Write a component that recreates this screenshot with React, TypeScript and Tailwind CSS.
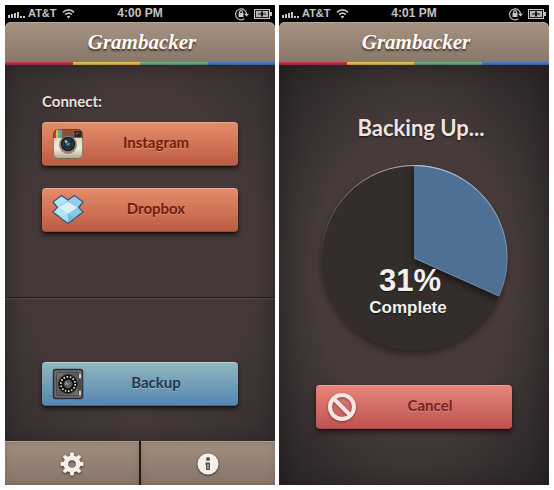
import type { ReactNode } from "react";

function StatusBar({ time }: { time: string }) {
  return (
    <div className="grid h-[17px] grid-cols-3 items-center bg-black px-[3px] font-['Liberation_Sans',Arial,sans-serif] text-[12px] leading-[17px] font-bold text-[#c4c4c4]">
      <div className="flex items-center gap-[3px] text-[11px]">
        <svg width="17" height="12" viewBox="0 0 17 12" fill="#c4c4c4" aria-hidden="true">
          <rect x="0" y="7" width="2" height="3" />
          <rect x="3" y="6" width="2" height="4" />
          <rect x="6" y="5" width="2" height="5" />
          <rect x="9" y="4" width="2" height="6" />
          <rect x="12" y="8" width="2" height="2" />
          <rect x="15" y="8" width="2" height="2" />
        </svg>
        <span>AT&amp;T</span>
        <svg className="ml-[2px]" width="13" height="11" viewBox="0 0 13 11" fill="none" stroke="#c4c4c4" strokeWidth="1.7" aria-hidden="true">
          <path d="M1 4.4C4 .9 9 .9 12 4.4" />
          <path d="M3.2 6.7c2-2.1 4.6-2.1 6.6 0" />
          <path d="M6.5 10.5 4.6 8.5Q6.5 7 8.4 8.5Z" fill="#c4c4c4" stroke="none" />
        </svg>
      </div>
      <span className="text-center">{time}</span>
      <div className="flex items-center justify-end gap-[5px]">
        <svg width="15" height="14" viewBox="0 0 15 14" fill="none" stroke="#c4c4c4" strokeWidth="1.2" aria-hidden="true">
          <path d="M10.5 11.6A5.5 5.5 0 1 1 12.5 7.5" />
          <path d="m10 6.7 2.6 2.8L15 6.7Z" fill="#c4c4c4" stroke="none" />
          <rect x="4.5" y="6" width="5" height="4" fill="#c4c4c4" stroke="none" />
          <path d="M5.6 6V5a1.4 1.4 0 0 1 2.8 0v1" />
        </svg>
        <svg width="18" height="10" viewBox="0 0 18 10" aria-hidden="true">
          <rect x=".5" y=".5" width="15" height="9" fill="#202020" stroke="#c4c4c4" />
          <rect x="2" y="2" width="12" height="6" fill="#b4b4b4" />
          <path d="M16 3h2v4h-2z" fill="#c4c4c4" />
          <path d="M4 4.5h3v-2h2v2h3v1H9v2H7v-2H4Z" fill="#151515" />
        </svg>
      </div>
    </div>
  );
}

function Header() {
  return (
    <header className="bg-black">
      <div className="flex h-10 items-center justify-center rounded-t-md bg-linear-to-b from-[#a5917f] via-[#998677] to-[#89776a] pl-1 inset-shadow-[0_1px_0_#b9a699]">
        <h1 className="font-['Liberation_Serif',serif] text-[21px] leading-8 font-bold text-[#fffaf2] italic [text-shadow:0_2px_2px_#3d3029]">
          Grambacker
        </h1>
      </div>
      <div className="grid h-[3px] grid-cols-4">
        <span className="bg-linear-to-b from-[#c83750] to-[#93283b]" />
        <span className="bg-linear-to-b from-[#f3ce58] to-[#b78e37]" />
        <span className="bg-linear-to-b from-[#7dbb91] to-[#477e5c]" />
        <span className="bg-linear-to-b from-[#527dcd] to-[#345c9f]" />
      </div>
    </header>
  );
}

function Phone({ time, label, children }: { time: string; label: string; children: ReactNode }) {
  return (
    <section aria-label={label} className="flex min-w-0 flex-1 flex-col bg-[#292324]">
      <StatusBar time={time} />
      <Header />
      {children}
    </section>
  );
}

const tones = {
  orange: "from-[#e48c69] to-[#bd5c44] text-[#701d0c] border-t-[#efa98a] border-b-[#9c4937] [text-shadow:0_1px_0_#e2906f]",
  blue: "from-[#8fb7bd] to-[#5686b1] text-[#26384b] border-t-[#b5d4d2] border-b-[#426b90] [text-shadow:0_1px_0_#92b5c5]",
  red: "from-[#e8857a] to-[#bd5352] text-[#702522] border-t-[#f09d91] border-b-[#a34645] [text-shadow:0_1px_0_#dc827b]",
};

function ActionButton({ tone, icon, children }: { tone: keyof typeof tones; icon: ReactNode; children: ReactNode }) {
  return (
    <button
      type="button"
      className={`grid h-11 w-full grid-cols-[32px_1fr] items-center rounded-[4px] border-y bg-linear-to-b px-[10px] font-['Lato',sans-serif] text-[15px] leading-5 font-bold shadow-[0_3px_5px_#171111cc,0_1px_1px_#171111] ${tones[tone]}`}
    >
      {icon}
      <span className="px-3 pb-1 text-center">{children}</span>
    </button>
  );
}

function CameraIcon() {
  return (
    <svg width="32" height="32" viewBox="0 0 32 32" aria-hidden="true">
      <defs>
        <linearGradient id="cameraBody" x2="0" y2="1">
          <stop stopColor="#d5c7ad" />
          <stop offset=".65" stopColor="#f2ead9" />
          <stop offset="1" stopColor="#a99c86" />
        </linearGradient>
        <clipPath id="cameraClip"><rect x="1" y="1" width="30" height="30" rx="5" /></clipPath>
        <radialGradient id="cameraLens">
          <stop stopColor="#69a3aa" />
          <stop offset=".45" stopColor="#244450" />
          <stop offset="1" stopColor="#0a1118" />
        </radialGradient>
      </defs>
      <g clipPath="url(#cameraClip)">
        <rect width="32" height="32" fill="url(#cameraBody)" />
        <rect width="32" height="10" fill="#8a5238" />
        <rect x="2" width="2" height="10" fill="#c83b34" />
        <rect x="4" width="2" height="10" fill="#e8b746" />
        <rect x="6" width="2" height="10" fill="#70ad56" />
        <rect x="8" width="2" height="10" fill="#4a9dcc" />
        <rect x="22.5" y="3" width="7" height="6" rx="1" fill="#28252a" />
        <path d="M24.5 7V5h3" fill="none" stroke="#666773" />
      </g>
      <circle cx="16" cy="17" r="9" fill="#55473988" />
      <circle cx="16" cy="16" r="7.7" fill="#17191c" stroke="#8d877b" strokeWidth="1" />
      <circle cx="16" cy="16" r="5" fill="url(#cameraLens)" stroke="#40515c" />
      <circle cx="14" cy="13.5" r="1.3" fill="#aad4d8" />
      <rect x="1.5" y="1.5" width="29" height="29" rx="5" fill="none" stroke="#583b2c" strokeOpacity=".6" />
    </svg>
  );
}

function BoxIcon() {
  return (
    <svg width="32" height="32" viewBox="0 0 32 32" strokeLinejoin="round" aria-hidden="true">
      <path d="M9.5 1.5 16 6l6.5-4.5L31 8l-4.5 5.5L31 18l-4.5 3.5-10.5 8-10.5-8L1 18l4.5-4.5L1 8Z" fill="#5ca6d3" stroke="#3f5570" strokeWidth="1.5" />
      <path d="M9.5 2.5 16 7 6 13 2 8Z" fill="#b4e0f5" />
      <path d="M22.5 2.5 16 7l10 6 4-5Z" fill="#96d0ee" />
      <path d="m6 13.5 10-6 10 6-10 6.5Z" fill="#d8effa" />
      <path d="m6 13.5 10 6.5-6 3.5L2 18Z" fill="#b7e3f6" />
      <path d="M26 13.5 16 20l6 3.5 8-5.5Z" fill="#89c8e8" />
      <path d="m6 21.5 4 2 6-3.5v8.500Z" fill="#aadcf3" />
      <path d="m26 21.5-4 2-6-3.5v8.500Z" fill="#75bbe2" />
    </svg>
  );
}

function SafeIcon() {
  return (
    <svg width="32" height="32" viewBox="0 0 32 32" aria-hidden="true">
      <defs>
        <linearGradient id="safeMetal" x2="1" y2="1">
          <stop stopColor="#777471" />
          <stop offset=".5" stopColor="#5b5856" />
          <stop offset="1" stopColor="#777370" />
        </linearGradient>
      </defs>
      <rect x="1.5" y="1.5" width="29" height="29" rx="2" fill="#6d6a69" stroke="#2b2e3a" strokeWidth="1.5" />
      <rect x="4.5" y="4.5" width="22" height="23" rx="1" fill="url(#safeMetal)" stroke="#4a4848" />
      <path d="M28 6v4m0 13v4" stroke="#eee" strokeWidth="1.5" />
      <path d="M28 11v11" stroke="#292929" strokeWidth="1" />
      <circle cx="16" cy="16" r="9.5" fill="#090909" stroke="#343434" />
      <circle cx="16" cy="16" r="7.2" fill="none" stroke="#f0f0e9" strokeWidth="1.7" strokeDasharray="1.6 1.63" />
      <circle cx="16" cy="16" r="4.5" fill="#5b5b5b" stroke="#242424" />
      <path d="m14 13 2 3 3-2-3 3v2l-1-3-2 1Z" fill="#a2a2a2" />
    </svg>
  );
}

function CancelIcon() {
  return (
    <svg width="32" height="32" viewBox="0 0 32 32" aria-hidden="true" className="drop-shadow-[0_1px_1px_#7a3934]">
      <circle cx="16" cy="16" r="12" fill="none" stroke="#f5e6e3" strokeWidth="4" />
      <path d="m8 8 16 16" stroke="#f5e6e3" strokeWidth="4" />
    </svg>
  );
}

function GearIcon() {
  const teeth = [0, 45, 90, 135, 180, 225, 270, 315];
  return (
    <svg width="26" height="26" viewBox="0 0 26 26" fill="#f4f1ed" aria-hidden="true" className="drop-shadow-[0_1px_1px_#3e3028]">
      {teeth.map((angle) => (
        <path key={angle} d="M10.8 6 11.3 1.5h3.4l.5 4.5Z" transform={`rotate(${angle} 13 13)`} />
      ))}
      <circle cx="13" cy="13" r="6.2" fill="none" stroke="#f4f1ed" strokeWidth="4.8" />
    </svg>
  );
}

function InfoIcon() {
  return (
    <svg width="24" height="24" viewBox="0 0 24 24" aria-hidden="true" className="drop-shadow-[0_1px_1px_#3e3028]">
      <circle cx="12" cy="12" r="10.5" fill="#f4f1ed" />
      <circle cx="12" cy="7" r="2" fill="#5f4f44" />
      <path d="M9.5 10.5H14V18h-4v-5h-.5Z" fill="#5f4f44" />
      <path d="M11 12h2v5h-2Z" fill="#9b8a7b" />
    </svg>
  );
}

function ProgressPie({ percent }: { percent: number }) {
  const angle = (percent / 100) * Math.PI * 2 + 0.045;
  const x = 93 + 93 * Math.sin(angle);
  const y = 93 - 93 * Math.cos(angle);
  const wedge = `M93 93V0A93 93 0 0 1 ${x} ${y}Z`;
  return (
    <div className="relative mx-auto mt-[23px] w-fit">
      <svg className="block overflow-visible" width="186" height="186" viewBox="0 0 186 186" aria-hidden="true">
        <defs>
          <linearGradient id="pieRim" x2="0" y2="1">
            <stop stopColor="#b9b3ae" />
            <stop offset=".4" stopColor="#665e5b" stopOpacity=".4" />
            <stop offset=".6" stopColor="#332e2b" stopOpacity="0" />
          </linearGradient>
          <linearGradient id="wedgeRim" x2="0" y2="1">
            <stop stopColor="#a9c0d4" />
            <stop offset="1" stopColor="#6889a8" />
          </linearGradient>
          <clipPath id="pieClip"><circle cx="93" cy="93" r="93" /></clipPath>
        </defs>
        <circle cx="93" cy="93" r="93" fill="#332e2b" className="drop-shadow-[0_4px_3px_#2d2524]" />
        <g clipPath="url(#pieClip)">
          <path d={wedge} fill="#4e7095" className="drop-shadow-[0_4px_4px_#171311]" />
        </g>
        <circle cx="93" cy="93" r="92.5" fill="none" stroke="url(#pieRim)" />
        <path d={`M93 .5A92.5 92.5 0 0 1 ${x} ${y}L93 93`} fill="none" stroke="url(#wedgeRim)" />
      </svg>
      <div className="absolute inset-x-0 top-[100px] pr-3 text-center font-['Liberation_Sans',Arial,sans-serif] font-bold text-[#f2f0ed] [text-shadow:0_1px_1px_#171311]">
        <div className="pl-1 text-[31px] leading-8">{percent}%</div>
        <div className="text-[17px] leading-[22px]">Complete</div>
      </div>
    </div>
  );
}

const tabStyle =
  "flex h-11 flex-1 items-center justify-center bg-linear-to-b from-[#a08d7e] to-[#857568] border-t border-[#b09d8f] inset-shadow-[0_0_5px_#594b4266]";

export default function App() {
  return (
    <main className="flex min-h-screen gap-1 bg-white p-[5px]">
      <Phone time="4:00 PM" label="Connect accounts">
        <div className="flex flex-1 flex-col bg-radial from-[#443938] from-60% to-[#342c2d] inset-shadow-[0_2px_14px_#211c1d99]">
          <div className="px-[37px] pt-[26px]">
            <h2 className="font-['Lato',sans-serif] text-[15px] leading-5 font-bold text-[#ebe1df] [text-shadow:0_1px_1px_#191313]">
              Connect:
            </h2>
            <div className="mt-[11px] flex flex-col gap-[22px]">
              <ActionButton tone="orange" icon={<CameraIcon />}>Instagram</ActionButton>
              <ActionButton tone="orange" icon={<BoxIcon />}>Dropbox</ActionButton>
            </div>
          </div>
          <hr className="mt-[65px] border-t border-b border-t-[#211918] border-b-[#514544]" />
          <div className="px-[37px] pt-[63px] pb-[35px]">
            <ActionButton tone="blue" icon={<SafeIcon />}>Backup</ActionButton>
          </div>
        </div>
        <nav className="flex gap-[2px] bg-[#231a18]">
          <button type="button" aria-label="Settings" className={tabStyle}><GearIcon /></button>
          <button type="button" aria-label="Information" className={tabStyle}><InfoIcon /></button>
        </nav>
      </Phone>
      <Phone time="4:01 PM" label="Backup progress">
        <div className="flex-1 bg-radial from-[#463b3a] from-50% to-[#272223] px-[37px] pt-[49px] pb-14 inset-shadow-[0_2px_16px_#1d191b88]">
          <h2 className="pl-[14px] text-center font-['Lato',sans-serif] text-[22px] leading-7 font-bold text-[#f0e4e1] [text-shadow:0_1px_2px_#191313]">
            Backing Up...
          </h2>
          <ProgressPie percent={31} />
          <div className="mt-[34px]">
            <ActionButton tone="red" icon={<CancelIcon />}>Cancel</ActionButton>
          </div>
        </div>
      </Phone>
    </main>
  );
}
